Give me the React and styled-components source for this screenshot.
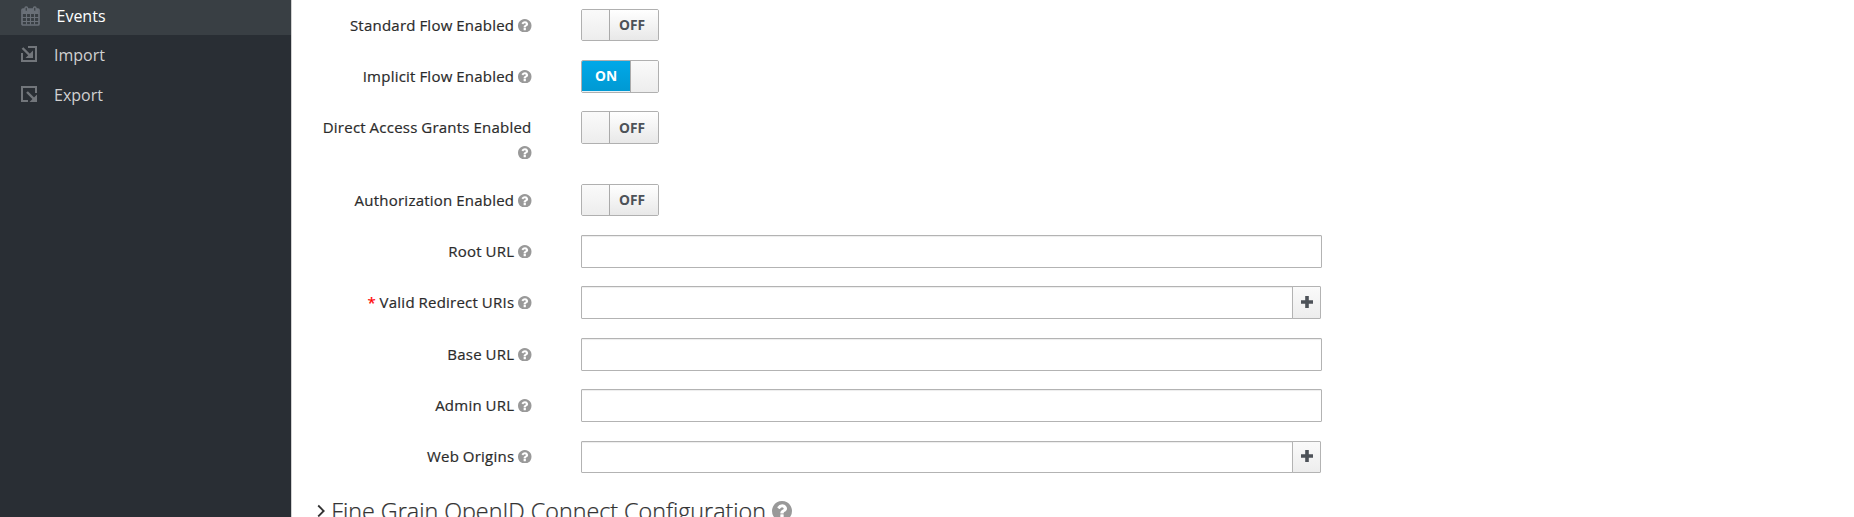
import React from 'react';
import styled, { createGlobalStyle } from 'styled-components';

const GlobalStyle = createGlobalStyle`
  *, *::before, *::after { box-sizing: border-box; }
  body {
    margin: 0;
    background: #fff;
    color: #333;
    font-family: "Open Sans", "Noto Sans", sans-serif;
    font-size: 15px;
    line-height: 25px;
  }
`;

const Page = styled.div`
  display: flex;
  height: 517px;
  overflow: hidden;
`;

const Sidebar = styled.nav`
  flex: 0 0 292px;
  background: #292e34;
  border-right: 1px solid #d1d1d1;
`;

const NavItem = styled.a`
  display: flex;
  align-items: center;
  height: ${(p) => (p.$active ? 35 : 40)}px;
  padding: ${(p) => (p.$active ? '0 0 3px 21px' : '0 0 0 21px')};
  background: ${(p) => (p.$active ? '#393f44' : 'transparent')};
  color: ${(p) => (p.$active ? '#fff' : '#d1d1d1')};
  font-size: 16px;
  svg { flex: none; margin-bottom: ${(p) => (p.$active ? 0 : 2)}px; color: ${(p) => (p.$active ? '#6a7078' : '#72767b')}; }
`;

const NavText = styled.span`
  margin-left: ${(p) => p.$gap}px;
`;

const Main = styled.main`
  flex: 1;
  padding-top: 9px;
`;

const Field = styled.div`
  display: flex;
  height: ${(p) => p.$height}px;
`;

const Label = styled.label`
  flex: 0 0 239.5px;
  padding: ${(p) => p.$offset}px 0 0 24px;
  margin-right: 49.5px;
  text-align: right;
  font-weight: 500;
  letter-spacing: 0.23px;
  word-spacing: -0.4px;
  -webkit-text-stroke: 0.2px currentColor;
  color: #2b2b2b;
`;

const Required = styled.span`
  color: #f00;
`;

const HelpSvg = styled.svg`
  width: ${(p) => p.$size}px;
  height: ${(p) => p.$size}px;
  vertical-align: ${(p) => p.$drop}px;
  color: #999;
`;

const Input = styled.input`
  width: ${(p) => p.$width}px;
  height: ${(p) => p.$tall}px;
  padding: 2px 7px;
  border: 1px solid #b3b3b3;
  border-radius: ${(p) => (p.$joined ? '1px 0 0 1px' : '1px')};
  box-shadow: inset 0 1px 1px rgba(3, 3, 3, 0.075);
  outline: none;
`;

const AddButton = styled.button`
  display: flex;
  align-items: center;
  justify-content: center;
  width: 29px;
  height: ${(p) => p.$tall}px;
  margin-left: -1px;
  padding: 0 0 2px;
  border: 1px solid #b3b3b3;
  border-radius: 0 1px 1px 0;
  background: linear-gradient(#fafafa, #ededed);
  color: #4d5258;
`;

const Switch = styled.div`
  display: flex;
  width: 78px;
  height: ${(p) => p.$tall}px;
  border: 1px solid #b0b0b0;
  border-radius: 2px;
  overflow: hidden;
`;

const Knob = styled.span`
  width: 28px;
  background: linear-gradient(#fafafa, #ededed);
  border: 0 solid #aaa;
  border-width: ${(p) => (p.$right ? '0 0 0 1px' : '0 1px 0 0')};
`;

const State = styled.span`
  flex: 1;
  display: flex;
  align-items: center;
  justify-content: center;
  padding: ${(p) => (p.$on ? '0 0 1px' : '0 4px 1px 0')};
  font-size: 13.75px;
  font-weight: 700;
  border-bottom: ${(p) => (p.$on ? '1px solid #e6f2f8' : '0')};
  color: ${(p) => (p.$on ? '#fff' : '#4d5258')};
  background: ${(p) => (p.$on ? 'linear-gradient(#00a8e8, #0099d3)' : 'linear-gradient(#fff, #e8e8e8)')};
`;

const Legend = styled.h2`
  display: flex;
  align-items: center;
  margin: 0 0 0 25px;
  height: 34px;
  font-size: 23.3px;
  font-weight: 300;
  -webkit-text-stroke: 0.25px currentColor;
  line-height: 34px;
  white-space: nowrap;
  span { margin: 0 6px 0 6.3px; }
  svg { flex: none; }
`;

const Help = ({ size = 13.5, drop = -1.2 }) => (
  <HelpSvg $size={size} $drop={drop} viewBox="0 0 1536 1536">
    <path fill="currentColor" d="M896 1248v-192q0-14-9-23t-23-9h-192q-14 0-23 9t-9 23v192q0 14 9 23t23 9h192q14 0 23-9t9-23zM1152 576q0-88-55.500-163t-138.500-116-170-41q-243 0-371 213-15 24 8 42l132 100q7 6 19 6 16 0 25-12 53-68 86-92 34-24 86-24 48 0 85.500 26t37.500 59q0 38-20 61t-68 45q-63 28-115.500 86.500t-52.500 125.500v36q0 14 9 23t23 9h192q14 0 23-9t9-23q0-19 21.500-49.500t54.500-49.500q32-18 49-28.500t46-35 44.500-48 28-60.500 12.500-81zM1536 768q0 209-103 385.500t-279.500 279.500-385.500 103-385.500-103-279.500-279.500-103-385.500 103-385.500 279.500-279.500 385.500-103 385.500 103 279.500 279.500 103 385.500z" />
  </HelpSvg>
);

const Calendar = () => (
  <svg width="19" height="20" viewBox="0 0 19 20" fill="none" stroke="currentColor">
    <path d="M1.500 3h16v4h-16z" fill="currentColor" stroke="none" />
    <rect x="1" y="3" width="17" height="16" rx="1" strokeWidth="1.700" />
    <path d="M1 7.500h17M1 11.500h17M1 15.500h17M5.500 7.500v11M9.500 7.500v11M13.500 7.500v11" strokeWidth="1.100" />
    <rect x="4" y="1" width="2.500" height="4.500" rx="1" fill="#393f44" strokeWidth="1.300" />
    <rect x="12.500" y="1" width="2.500" height="4.500" rx="1" fill="#393f44" strokeWidth="1.300" />
  </svg>
);

const ImportIcon = () => (
  <svg width="16" height="16" viewBox="0 0 16 16" fill="none" stroke="currentColor" strokeWidth="2">
    <path d="M7 1h8v14H1V7" />
    <path d="M1.500 2l7.500 7.500" strokeWidth="2.400" />
    <path d="M12 4.500V12H4.500z" fill="currentColor" stroke="none" />
  </svg>
);

const ExportIcon = () => (
  <svg width="16" height="16" viewBox="0 0 16 16" fill="none" stroke="currentColor" strokeWidth="2">
    <path d="M15 7V1H1v14h6" />
    <path d="M6 6l8 8" strokeWidth="2.400" />
    <path d="M16 8.500v7.500H8.500z" fill="currentColor" stroke="none" />
  </svg>
);

const Plus = () => (
  <svg width="12" height="12" viewBox="0 0 12 12" fill="currentColor">
    <path d="M4.200 0h3.600v4.200H12v3.600H7.800V12H4.200V7.800H0V4.200h4.200z" />
  </svg>
);

const Chevron = () => (
  <svg width="8" height="14" viewBox="0 0 8 14" fill="none" stroke="#333" strokeWidth="1.800">
    <path d="M1.200 1.500l5.500 5.500-5.500 5.500" />
  </svg>
);

const Toggle = ({ on, tall }) => (
  <Switch $tall={tall}>
    {on ? (
      <><State $on>ON</State><Knob $right /></>
    ) : (
      <><Knob /><State>OFF</State></>
    )}
  </Switch>
);

const fields = [
  { label: 'Standard Flow Enabled', kind: 'toggle', height: 51, tall: 32 },
  { label: 'Implicit Flow Enabled', kind: 'toggle', on: true, height: 51, tall: 33 },
  { label: 'Direct Access Grants Enabled', kind: 'toggle', height: 73, tall: 33 },
  { label: 'Authorization Enabled', kind: 'toggle', height: 51, tall: 32 },
  { label: 'Root URL', kind: 'text', height: 51, tall: 33 },
  { label: 'Valid Redirect URIs', kind: 'list', required: true, height: 52, tall: 33 },
  { label: 'Base URL', kind: 'text', height: 51, tall: 33 },
  { label: 'Admin URL', kind: 'text', height: 52, tall: 33 },
  { label: 'Web Origins', kind: 'list', height: 53, tall: 32, offset: 3 },
];

const Control = ({ field }) => {
  if (field.kind === 'toggle') return <Toggle on={field.on} tall={field.tall} />;
  if (field.kind === 'text') return <Input $width={741} $tall={field.tall} />;
  return (
    <>
      <Input $width={712} $tall={field.tall} $joined />
      <AddButton $tall={field.tall}><Plus /></AddButton>
    </>
  );
};

export default function App() {
  return (
    <Page>
      <GlobalStyle />
      <Sidebar>
        <NavItem $active><Calendar /><NavText $gap={16.5}>Events</NavText></NavItem>
        <NavItem><ImportIcon /><NavText $gap={17}>Import</NavText></NavItem>
        <NavItem><ExportIcon /><NavText $gap={17}>Export</NavText></NavItem>
      </Sidebar>
      <Main>
        {fields.map((f) => (
          <Field key={f.label} $height={f.height}>
            <Label $offset={f.offset ?? 4}>
              {f.required && <Required>* </Required>}
              {f.label} <Help />
            </Label>
            <Control field={f} />
          </Field>
        ))}
        <Legend><Chevron /><span>Fine Grain OpenID Connect Configuration</span><Help size={20} /></Legend>
      </Main>
    </Page>
  );
}
